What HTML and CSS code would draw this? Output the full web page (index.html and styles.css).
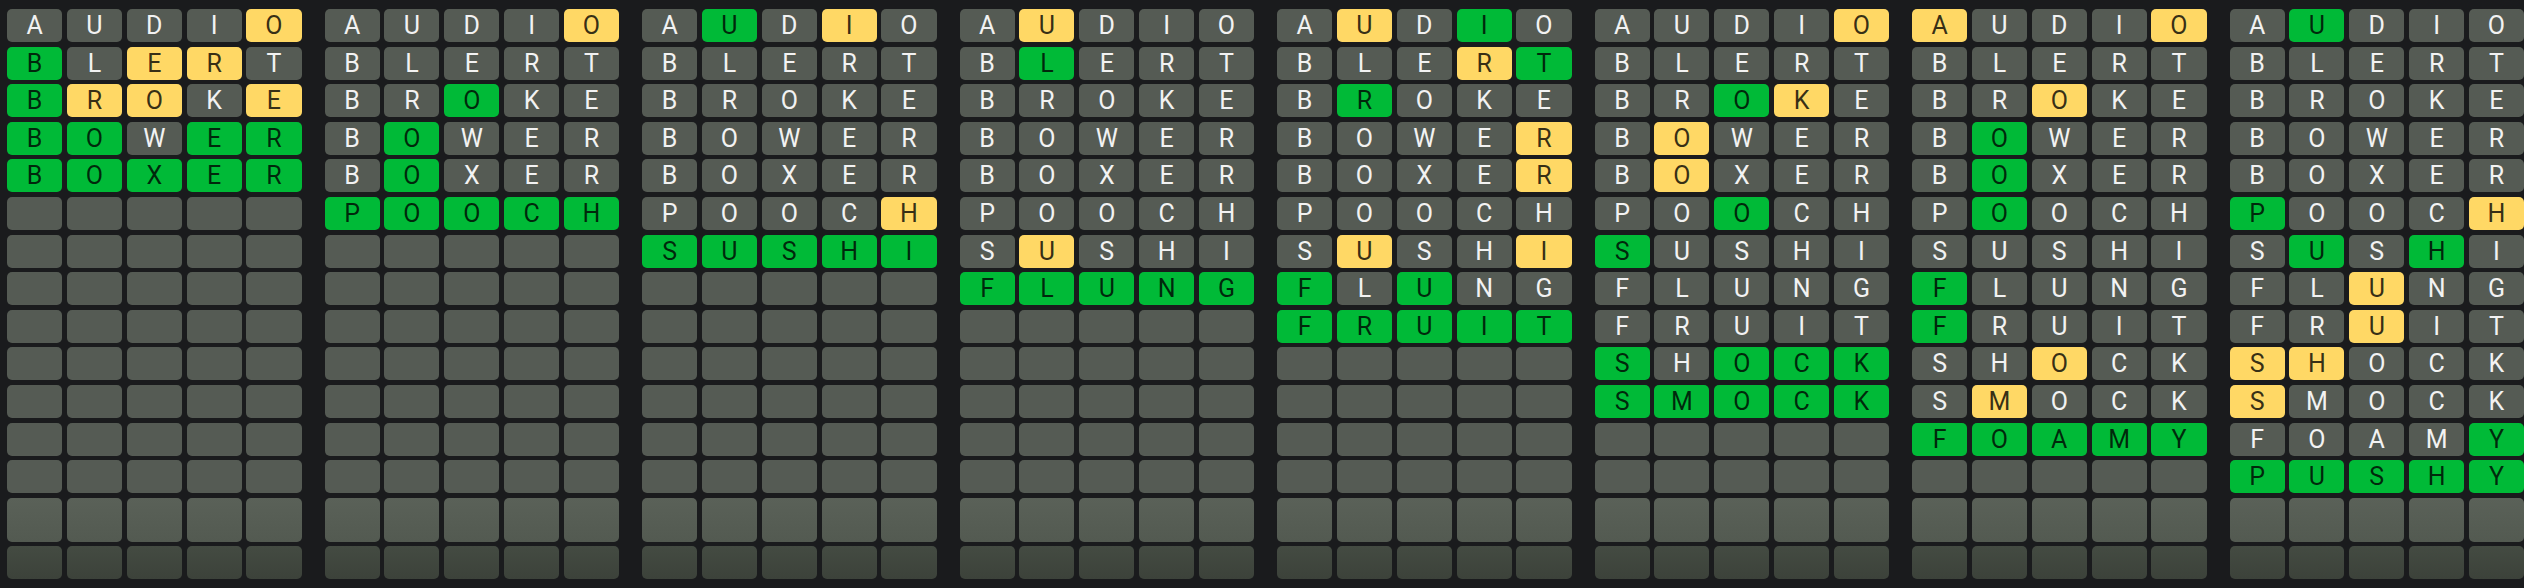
FILE: index.html
```html
<!DOCTYPE html>
<html lang="en">
<head>
  <meta charset="UTF-8" />
  <meta name="viewport" content="width=device-width, initial-scale=1.0"/>
  <title>Octordle boards</title>
  <link rel="stylesheet" href="styles.css">
</head>
<body>
  <div id="boards" class="boards"></div>

  <script>
    // each guess: word + pattern (. = absent, y = present, g = correct)
    const boards = [
      ["AUDIO ....y", "BLERT g.yy.", "BROKE gyy.y", "BOWER gg.gg", "BOXER ggggg"],
      ["AUDIO ....y", "BLERT .....", "BROKE ..g..", "BOWER .g...", "BOXER .g...", "POOCH ggggg"],
      ["AUDIO .g.y.", "BLERT .....", "BROKE .....", "BOWER .....", "BOXER .....", "POOCH ....y", "SUSHI ggggg"],
      ["AUDIO .y...", "BLERT .g...", "BROKE .....", "BOWER .....", "BOXER .....", "POOCH .....", "SUSHI .y...", "FLUNG ggggg"],
      ["AUDIO .y.g.", "BLERT ...yg", "BROKE .g...", "BOWER ....y", "BOXER ....y", "POOCH .....", "SUSHI .y..y", "FLUNG g.g..", "FRUIT ggggg"],
      ["AUDIO ....y", "BLERT .....", "BROKE ..gy.", "BOWER .y...", "BOXER .y...", "POOCH ..g..", "SUSHI g....", "FLUNG .....", "FRUIT .....", "SHOCK g.ggg", "SMOCK ggggg"],
      ["AUDIO y...y", "BLERT .....", "BROKE ..y..", "BOWER .g...", "BOXER .g...", "POOCH .g...", "SUSHI .....", "FLUNG g....", "FRUIT g....", "SHOCK ..y..", "SMOCK .y...", "FOAMY ggggg"],
      ["AUDIO .g...", "BLERT .....", "BROKE .....", "BOWER .....", "BOXER .....", "POOCH g...y", "SUSHI .g.g.", "FLUNG ..y..", "FRUIT ..y..", "SHOCK yy...", "SMOCK y....", "FOAMY ....g", "PUSHY ggggg"]
    ];
    const ROWS = 15;
    const container = document.getElementById("boards");

    boards.forEach((guesses) => {
      const board = document.createElement("div");
      board.className = "board";
      for (let r = 0; r < ROWS; r++) {
        const [word, marks] = (guesses[r] || "      ").split(" ");
        for (let c = 0; c < 5; c++) {
          const tile = document.createElement("div");
          tile.className = "tile";
          if (r === ROWS - 2) tile.classList.add("near-end");
          if (r === ROWS - 1) tile.classList.add("end");
          if (marks && marks[c] === "g") tile.classList.add("correct");
          if (marks && marks[c] === "y") tile.classList.add("present");
          tile.textContent = word ? word[c] : "";
          board.appendChild(tile);
        }
      }
      container.appendChild(board);
    });
  </script>
</body>
</html>
```

FILE: styles.css
```css
* {
  box-sizing: border-box;
}
body {
  margin: 0;
  background-color: #1a1b1d;
  font-family: Roboto, "Noto Sans", sans-serif;
  overflow: hidden;
}
.boards {
  display: grid;
  grid-template-columns: repeat(8, 1fr);
  column-gap: 23px;
  width: 2524px;
  height: 588px;
  padding: 9px 0 0 7px;
}
.board {
  display: grid;
  grid-template-columns: repeat(5, 1fr);
  grid-template-rows: repeat(13, 33px) 44px 33px;
  gap: 4.6px 4.7px;
}
.tile {
  display: flex;
  align-items: center;
  justify-content: center;
  border-radius: 5px;
  background-color: #555b54;
  color: #f2f2f2;
  font-size: 25px;
  font-weight: 400;
}
.tile.correct {
  background-color: #00ba37;
  color: rgba(0, 0, 0, 0.78);
}
.tile.present {
  background-color: #ffd865;
  color: rgba(0, 0, 0, 0.8);
}
.tile.near-end {
  background: linear-gradient(#5a6158, #535a51);
}
.tile.end {
  background: linear-gradient(#444b42, #3c423a);
}
```
